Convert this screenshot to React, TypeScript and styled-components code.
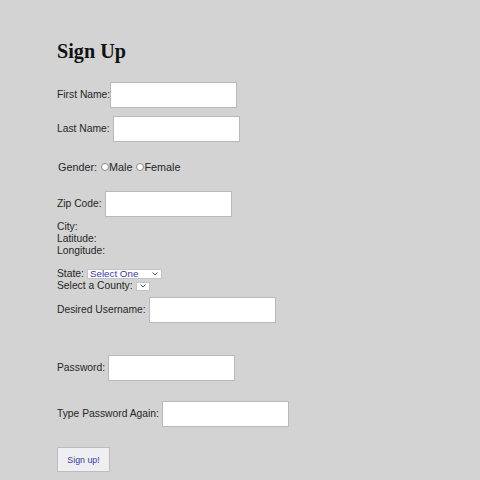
import React from "react";
import styled, { createGlobalStyle } from "styled-components";

const Global = createGlobalStyle`
  html, body { margin: 0; padding: 0; background: #d3d3d3; }
  body { font-family: "Liberation Sans", Arial, sans-serif; }
`;

const Page = styled.div`
  min-height: 480px;
  background: #d3d3d3;
  padding: 39px 0 0 57px;
  box-sizing: border-box;
  color: #262626;
  font-family: "Liberation Sans", Arial, sans-serif;
  font-size: 10.3px;
  line-height: 12px;
`;

const Title = styled.h1`
  margin: 0;
  font-family: "Liberation Serif", "Times New Roman", serif;
  font-weight: bold;
  font-size: 20.2px;
  line-height: 24px;
  color: #111;
`;

const Form = styled.form`
  display: flex;
  flex-direction: column;
  align-items: flex-start;
`;

const Row = styled.div<{ $mt: number; $gap?: number; $indent?: number; $size?: number }>`
  display: flex;
  align-items: center;
  margin-top: ${(p) => p.$mt}px;
  gap: ${(p) => (p.$gap ?? 3)}px;
  padding-left: ${(p) => p.$indent ?? 0}px;
  font-size: ${(p) => (p.$size ? `${p.$size}px` : "inherit")};
  white-space: nowrap;
`;

const Label = styled.label`
  display: block;
`;

const TextInput = styled.input`
  width: 127px;
  height: 26px;
  box-sizing: border-box;
  border: 1px solid #b9b9b9;
  background: #fff;
  margin: 0;
  padding: 0 4px;
  font: inherit;
`;

const Radio = styled.input`
  appearance: none;
  width: 8px;
  height: 8px;
  margin: 0 0 0 1px;
  border: 1px solid #8a8a8a;
  border-radius: 50%;
  background: #fff;
  box-sizing: border-box;
`;

const RadioOption = styled.label`
  display: flex;
  align-items: center;
`;

const InfoBlock = styled.div<{ $mt: number }>`
  margin-top: ${(p) => p.$mt}px;
  display: flex;
  flex-direction: column;
`;

const SelectBox = styled.div<{ $w: number; $h: number }>`
  display: flex;
  align-items: center;
  width: ${(p) => p.$w}px;
  height: ${(p) => p.$h}px;
  box-sizing: border-box;
  border: 1px solid #c4c4c4;
  background: #fff;
  padding: 0 3px 0 2px;
`;

const Select = styled.select`
  appearance: none;
  border: none;
  background: transparent;
  flex: 1;
  min-width: 0;
  padding: 0;
  margin: 0;
  font-family: "Liberation Sans", Arial, sans-serif;
  font-size: 9.8px;
  line-height: 8px;
  height: 8px;
  color: #3a38a6;
  outline: none;
`;

const Button = styled.button`
  margin-top: 20px;
  width: 53px;
  height: 25px;
  box-sizing: border-box;
  border: 1px solid #bdbdbd;
  background: #efeff2;
  color: #3a38a6;
  font-family: "Liberation Sans", Arial, sans-serif;
  font-size: 8.8px;
  padding: 0;
`;

const Chevron = () => (
  <svg width="6" height="4" viewBox="0 0 6 4">
    <path d="M0.5 0.5 L3 3 L5.5 0.5" fill="none" stroke="#4a4a8a" strokeWidth="1" />
  </svg>
);

export default function App() {
  return (
    <Page>
      <Global />
      <Title>Sign Up</Title>
      <Form onSubmit={(e) => e.preventDefault()}>
        <Row $mt={19} $gap={0}>
          <Label>First Name:</Label>
          <TextInput type="text" />
        </Row>
        <Row $mt={8}>
          <Label>Last Name:</Label>
          <TextInput type="text" />
        </Row>
        <Row $mt={19} $gap={0} $indent={1} $size={10.8}>
          <Label>Gender:&nbsp;</Label>
          <RadioOption>
            <Radio type="radio" name="gender" />
            Male&nbsp;
          </RadioOption>
          <RadioOption>
            <Radio type="radio" name="gender" />
            Female
          </RadioOption>
        </Row>
        <Row $mt={18}>
          <Label>Zip Code:</Label>
          <TextInput type="text" />
        </Row>
        <InfoBlock $mt={4}>
          <span>City:</span>
          <span>Latitude:</span>
          <span>Longitude:</span>
        </InfoBlock>
        <Row $mt={11}>
          <Label>State:</Label>
          <SelectBox $w={75} $h={10}>
            <Select>
              <option>Select One</option>
            </Select>
            <Chevron />
          </SelectBox>
        </Row>
        <Row $mt={0}>
          <Label>Select a County:</Label>
          <SelectBox $w={14} $h={9}>
            <Select />
            <Chevron />
          </SelectBox>
        </Row>
        <Row $mt={5}>
          <Label>Desired Username:</Label>
          <TextInput type="text" />
        </Row>
        <Row $mt={32}>
          <Label>Password:</Label>
          <TextInput type="password" />
        </Row>
        <Row $mt={20}>
          <Label>Type Password Again:</Label>
          <TextInput type="password" />
        </Row>
        <Button type="submit">Sign up!</Button>
      </Form>
    </Page>
  );
}
